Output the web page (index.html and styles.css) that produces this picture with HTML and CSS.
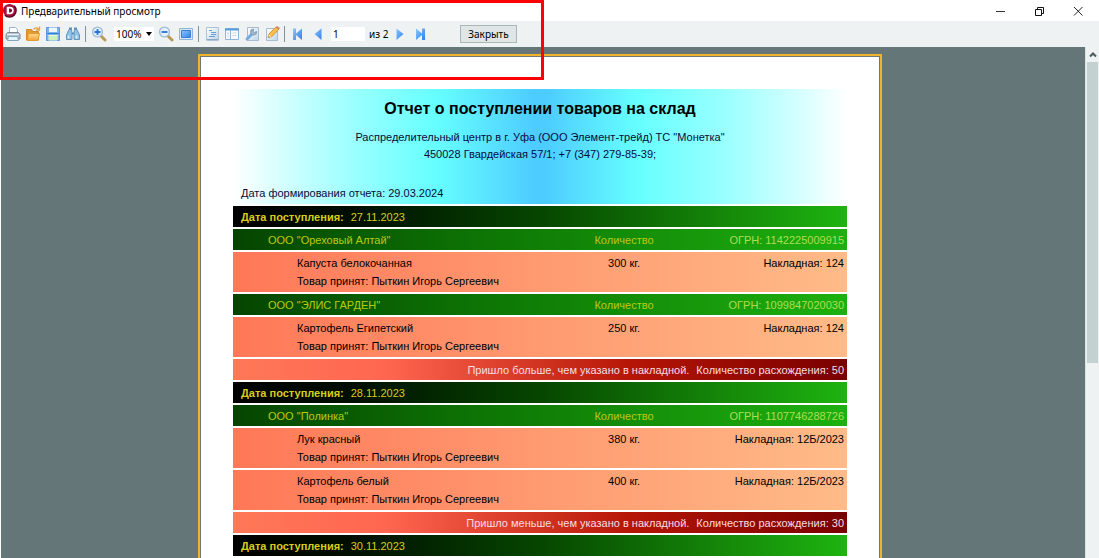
FILE: index.html
```
<!DOCTYPE html>
<html lang="ru">
<head>
<meta charset="utf-8">
<title>Предварительный просмотр</title>
<link rel="stylesheet" href="styles.css">
</head>
<body>
<svg class="defs" width="0" height="0" aria-hidden="true">
  <defs>
    <linearGradient id="blue" x1="0" y1="0" x2="1" y2="1"><stop offset="0" stop-color="#8cc8fc"/><stop offset="1" stop-color="#2f7fe8"/></linearGradient>
    <linearGradient id="sheet" x1="0" y1="0" x2="1" y2="1"><stop offset="0" stop-color="#ffffff"/><stop offset="1" stop-color="#bdd5e8"/></linearGradient>
    <linearGradient id="folder" x1="0" y1="0" x2="0" y2="1"><stop offset="0" stop-color="#ffdc88"/><stop offset="1" stop-color="#f0a236"/></linearGradient>
  </defs>
</svg>
<div class="window">
  <header class="titlebar">
    <svg class="logo" viewBox="0 0 16 16" aria-hidden="true"><circle cx="8" cy="8" r="7" fill="#a3113f"/><path d="M13 3a7 7 0 0 1-10 10" fill="none" stroke="#4d0a22" stroke-width="1.5"/><path d="M5 4h3.500a4 4 0 0 1 0 8H5z" fill="#fff"/><path d="M7.500 5.800h1a2.200 2.200 0 0 1 0 4.400h-1z" fill="#7d0d32"/></svg>
    <h1 class="caption">Предварительный просмотр</h1>
    <div class="winbuttons">
      <button class="winbtn" aria-label="Свернуть"><svg viewBox="0 0 10 10"><path d="M1 5.500h9" stroke="#333"/></svg></button>
      <button class="winbtn" aria-label="Восстановить"><svg viewBox="0 0 10 10"><path d="M1.500 3.500h6v6h-6zM3.500 3V1.500h6v6H8" fill="none" stroke="#111"/></svg></button>
      <button class="winbtn" aria-label="Закрыть окно"><svg viewBox="0 0 10 10"><path d="M1 1l8.500 8.500M9.500 1L1 9.500" stroke="#222" fill="none"/></svg></button>
    </div>
  </header>

  <div class="toolbar" role="toolbar">
    <button class="tool" aria-label="Печать"><svg viewBox="0 0 16 16"><path d="M4.500 7V1.500h6l2 2v3.500z" fill="#fff" stroke="#9db6cc"/><path d="M2.500 6.500h11l1.500 2v4.500H1V8.500z" fill="#b4bfca" stroke="#7c8a98"/><path d="M2 8.500h12" stroke="#edf2f6"/><path d="M3.500 10.500h9l1 4h-11z" fill="#e2f3fe" stroke="#86a6c0"/></svg></button>
    <button class="tool" aria-label="Открыть"><svg viewBox="0 0 16 16"><path d="M1.500 14V3.500h5l1.500 2h5.500V14z" fill="#e09a30" stroke="#d28b28"/><path d="M3.500 7.500h11l-1.500 7h-11z" fill="url(#folder)" stroke="#e09a36"/><path d="M8.500 3.500c1.500-2 3.500-2 5-.5M14.500.5v3.500H11" fill="none" stroke="#eba040" stroke-width="1.300"/></svg></button>
    <button class="tool" aria-label="Сохранить"><svg viewBox="0 0 16 16"><path d="M1.500 1.500h13v13h-13z" fill="#79b4f2" stroke="#5c98dc"/><path d="M4 1.500h8V6H4z" fill="#eef6fd"/><path d="M2 7.500h12" stroke="#3f80cf"/><path d="M3.500 9h9v5.500h-9z" fill="#e5fad9"/><path d="M4 11h8M4 13h8" stroke="#b4e6a4"/></svg></button>
    <button class="tool" aria-label="Найти"><svg viewBox="0 0 16 16"><path d="M4 3.500h2.500l.5 4V13.500H1.500V9zM12 3.500H9.500l-.5 4v6h5.500V9z" fill="#8fc2e6" stroke="#6296c0"/><path d="M4 2.500h3M9 2.500h3M7 7.500h2" stroke="#5a90bb" stroke-width="2"/><path d="M3.500 9.500v3M11.500 9.500v3" stroke="#e2f3ff" stroke-width="1.500"/></svg></button>
    <span class="sep"></span>
    <button class="tool" aria-label="Увеличить"><svg viewBox="0 0 16 16"><path d="M10 10l4 4" stroke="#b99a58" stroke-width="3" stroke-linecap="round"/><circle cx="6.500" cy="6" r="4.900" fill="#e4f2ff" stroke="#a3bbd2" stroke-width="1.400"/><path d="M6.500 3v6M3.500 6h6" stroke="#2871d6" stroke-width="1.800"/></svg></button>
    <span class="zoom"><select class="zoomlist" aria-label="Масштаб"><option>100%</option></select><svg class="arrow" viewBox="0 0 8 5" aria-hidden="true"><path d="M1 0h6L4 4z" fill="#000"/></svg></span>
    <button class="tool" aria-label="Уменьшить"><svg viewBox="0 0 16 16"><path d="M10 10l4 4" stroke="#b99a58" stroke-width="3" stroke-linecap="round"/><circle cx="6.500" cy="6" r="4.900" fill="#e4f2ff" stroke="#a3bbd2" stroke-width="1.400"/><path d="M3.500 6h6" stroke="#2871d6" stroke-width="1.800"/></svg></button>
    <button class="tool" aria-label="Во весь экран"><svg viewBox="0 0 16 16"><path d="M1.500 2.500h13v11h-13z" fill="#d5e7fa" stroke="#8fb4de"/><path d="M3.500 4.500h9v7h-9z" fill="url(#blue)" stroke="#3f7cd4"/></svg></button>
    <span class="sep"></span>
    <button class="tool" aria-label="Структура"><svg viewBox="0 0 16 16"><path d="M2.500 1.500h12v12h-12z" fill="url(#sheet)" stroke="#a9c3da"/><path d="M2.500 14h12" stroke="#6f93b4"/><path d="M5 4.500h3M7 6.500h5M7 8.500h5M5 10.500h6" stroke="#6a9cd6"/></svg></button>
    <button class="tool" aria-label="Эскизы"><svg viewBox="0 0 16 16"><path d="M1.500 2.500h13v11h-13z" fill="#f7fbff" stroke="#8fb6d8"/><path d="M1 3.500h14" stroke="#5a9ddb" stroke-width="2"/><path d="M6.500 4v9" stroke="#8fb6d8"/><path d="M3 7h2M4 7v5M8.500 7h4M8.500 9.500h4" stroke="#c9dbea"/></svg></button>
    <button class="tool" aria-label="Параметры страницы"><svg viewBox="0 0 16 16"><path d="M3.500 1.500h11v13h-11z" fill="url(#sheet)" stroke="#a9bccd"/><path d="M3 13l5.500-5.500" stroke="#76a9dc" stroke-width="3" stroke-linecap="round"/><path d="M12.500 5.500A3 3 0 1 1 9.500 3L9 5.500l1.500 1z" fill="#9fb9cf" stroke="#7f9cb6"/></svg></button>
    <button class="tool" aria-label="Редактировать"><svg viewBox="0 0 16 16"><path d="M2.500 2.500h11v12h-11z" fill="url(#sheet)" stroke="#a9bccd"/><path d="M5 8l7-7 3 2-7 7.500-4 1z" fill="#f7be4a" stroke="#d99638"/><path d="M11.500 1.500L13 0l3 2-1.500 1.700z" fill="#d98468"/><path d="M4 11.500l1-3 2.500 2z" fill="#fae5b7"/><path d="M4 11.500l1-1.200.6.700z" fill="#333"/></svg></button>
    <span class="sep"></span>
    <button class="tool" aria-label="Первая страница"><svg viewBox="0 0 16 16"><path d="M3 2.500h3v5l6-5v11.500l-6-5v5H3z" fill="url(#blue)"/></svg></button>
    <button class="tool" aria-label="Предыдущая страница"><svg viewBox="0 0 16 16"><path d="M11.500 2.500v11.500L4.500 8z" fill="url(#blue)"/></svg></button>
    <input class="pageno" type="text" value="1" aria-label="Номер страницы">
    <span class="total">из 2</span>
    <button class="tool" aria-label="Следующая страница"><svg viewBox="0 0 16 16"><path d="M4.500 2.500v11.500L11.500 8z" fill="url(#blue)"/></svg></button>
    <button class="tool" aria-label="Последняя страница"><svg viewBox="0 0 16 16"><path d="M13 2.500h-3v5L4 2.500v11.500l6-5v5h3z" fill="url(#blue)"/></svg></button>
    <button class="close">Закрыть</button>
  </div>

  <div class="workspace">
    <main class="desk">
      <article class="page">
        <header class="head">
          <h2 class="title">Отчет о поступлении товаров на склад</h2>
          <p class="org">Распределительный центр в г. Уфа (ООО Элемент-трейд) ТС "Монетка"</p>
          <p class="org">450028 Гвардейская 57/1; +7 (347) 279-85-39;</p>
          <p class="made">Дата формирования отчета: 29.03.2024</p>
        </header>

        <section class="row date"><b>Дата поступления:</b><span>27.11.2023</span></section>
        <section class="row cols vendor"><span>ООО "Ореховый Алтай"</span><span class="qty">Количество</span><span class="ref">ОГРН: 1142225009915</span></section>
        <section class="row cols item"><div><p>Капуста белокочанная</p><p>Товар принят: Пыткин Игорь Сергеевич</p></div><span class="qty">300 кг.</span><span class="ref">Накладная: 124</span></section>
        <section class="row cols vendor"><span>ООО "ЭЛИС ГАРДЕН"</span><span class="qty">Количество</span><span class="ref">ОГРН: 1099847020030</span></section>
        <section class="row cols item"><div><p>Картофель Египетский</p><p>Товар принят: Пыткин Игорь Сергеевич</p></div><span class="qty">250 кг.</span><span class="ref">Накладная: 124</span></section>
        <section class="row diff"><span>Пришло больше, чем указано в накладной.</span><span>Количество расхождения: 50</span></section>

        <section class="row date"><b>Дата поступления:</b><span>28.11.2023</span></section>
        <section class="row cols vendor"><span>ООО "Полинка"</span><span class="qty">Количество</span><span class="ref">ОГРН: 1107746288726</span></section>
        <section class="row cols item"><div><p>Лук красный</p><p>Товар принят: Пыткин Игорь Сергеевич</p></div><span class="qty">380 кг.</span><span class="ref">Накладная: 12Б/2023</span></section>
        <section class="row cols item"><div><p>Картофель белый</p><p>Товар принят: Пыткин Игорь Сергеевич</p></div><span class="qty">400 кг.</span><span class="ref">Накладная: 12Б/2023</span></section>
        <section class="row diff"><span>Пришло меньше, чем указано в накладной.</span><span>Количество расхождения: 30</span></section>

        <section class="row date"><b>Дата поступления:</b><span>30.11.2023</span></section>
        <section class="row cols vendor"></section>
      </article>
    </main>
    <div class="scrollbar" aria-hidden="true">
      <svg class="up" viewBox="0 0 12 14"><path d="M3 9l3-3 3 3" fill="none" stroke="#49585a" stroke-width="2"/></svg>
      <div class="thumb"></div>
    </div>
  </div>
  <div class="marker"></div>
</div>
</body>
</html>
```

FILE: styles.css
```
* { box-sizing: border-box; }
body, h1, h2, p { margin: 0; }
button, input, select { margin: 0; padding: 0; border: 0; background: none; font: inherit; color: inherit; }
.defs { position: absolute; }

.window {
  position: relative;
  display: flex;
  flex-direction: column;
  height: 100vh;
  overflow: hidden;
  background: #fff;
  font-family: "Noto Sans", sans-serif;
  font-size: 10px;
  color: #000;
}

.titlebar { display: flex; flex: none; align-items: center; height: 21px; padding: 0 2px; }
.logo { width: 15px; height: 15px; }
.caption { margin-left: 4px; font-size: 10px; font-weight: 400; }
.winbuttons { display: flex; margin-left: auto; }
.winbtn { display: grid; place-items: center; width: 39px; height: 20px; }
.winbtn svg { width: 10px; height: 10px; }

.toolbar { display: flex; flex: none; align-items: center; height: 26px; padding: 0 3px; background: #eef2f2; }
.tool { display: grid; flex: none; place-items: center; width: 20px; height: 20px; }
.tool svg { width: 16px; height: 16px; }
.sep { flex: none; width: 1px; height: 16px; margin: 0 3px 0 2px; background: #839293; }
.zoom { position: relative; width: 40px; height: 14px; margin: 0 2px 0 5px; background: #fff; }
.zoomlist { display: block; width: 100%; height: 14px; padding-left: 2px; appearance: none; }
.arrow { position: absolute; top: 5px; right: 1px; width: 8px; height: 5px; pointer-events: none; }
.pageno { width: 34px; height: 14px; margin: 0 4px 0 3px; padding-left: 2px; background: #fff; }
.total { width: 21px; }
.close { width: 57px; height: 18px; margin-left: 30px; border: 1px solid #a9b7b7; background: #e0e6e6; }

.workspace { display: flex; flex: 1; min-height: 0; padding-left: 1px; }
.desk { flex: 1; overflow: hidden; padding: 7px 6px 0 0; background: #657679; }
.scrollbar { flex: none; width: 14px; padding: 0 1px; border-left: 1px solid #dbe2e2; background: #eef2f2; }
.up { display: block; width: 12px; height: 15px; }
.thumb { height: 59%; background: #c4d1d1; }

.page {
  display: grid;
  gap: 2px;
  max-width: 684px;
  margin: 0 auto;
  padding: 33px 33px 40px;
  border: 2px solid #efb42c;
  box-shadow: inset 0 0 0 1px #6d7778;
  background: #fff;
  font-family: "Liberation Sans", Arial, sans-serif;
  font-size: 11px;
  line-height: 18px;
}
.head {
  height: 115px;
  padding: 10px 8px 0;
  background: linear-gradient(90deg, #fff 0%, #d4ffff 8%, #99ffff 20%, #66ffff 33%, #4dccff 49%, #4dccff 51%, #66ffff 66%, #99ffff 80%, #d4ffff 92%, #fff 100%);
  color: #0a0a3c;
  line-height: 17px;
}
.title { margin-bottom: 10px; color: #000; font-size: 16px; line-height: 20px; text-align: center; }
.org { text-align: center; }
.made { margin-top: 22px; }

.row { min-height: 21px; padding: 2px 3px 1px 8px; }
.cols { display: grid; grid-template-columns: 1fr 120px 160px; }
.qty { text-align: center; }
.ref { text-align: right; }
.date { display: flex; gap: 7px; background: linear-gradient(90deg, #000 0%, #000f00 20%, #064600 50%, #1eb40f 100%); color: #d8cc1c; }
.vendor { padding-left: 35px; background: linear-gradient(90deg, #054400 0%, #0e7a05 45%, #1eb010 100%); color: #b8cc0c; }
.vendor .ref { color: #aede50; }
.item { min-height: 40px; padding: 2px 3px 2px 64px; background: linear-gradient(90deg, #ff7858, #ffbb88); }
.diff { display: flex; justify-content: flex-end; gap: 7px; background: linear-gradient(90deg, #ff7858 0%, #ff6650 25%, #b51505 65%, #780000 100%); color: #f6dce4; }

.marker { position: absolute; top: 0; left: 0; width: 544px; height: 80px; border: 3px solid #fe0000; pointer-events: none; }
```
